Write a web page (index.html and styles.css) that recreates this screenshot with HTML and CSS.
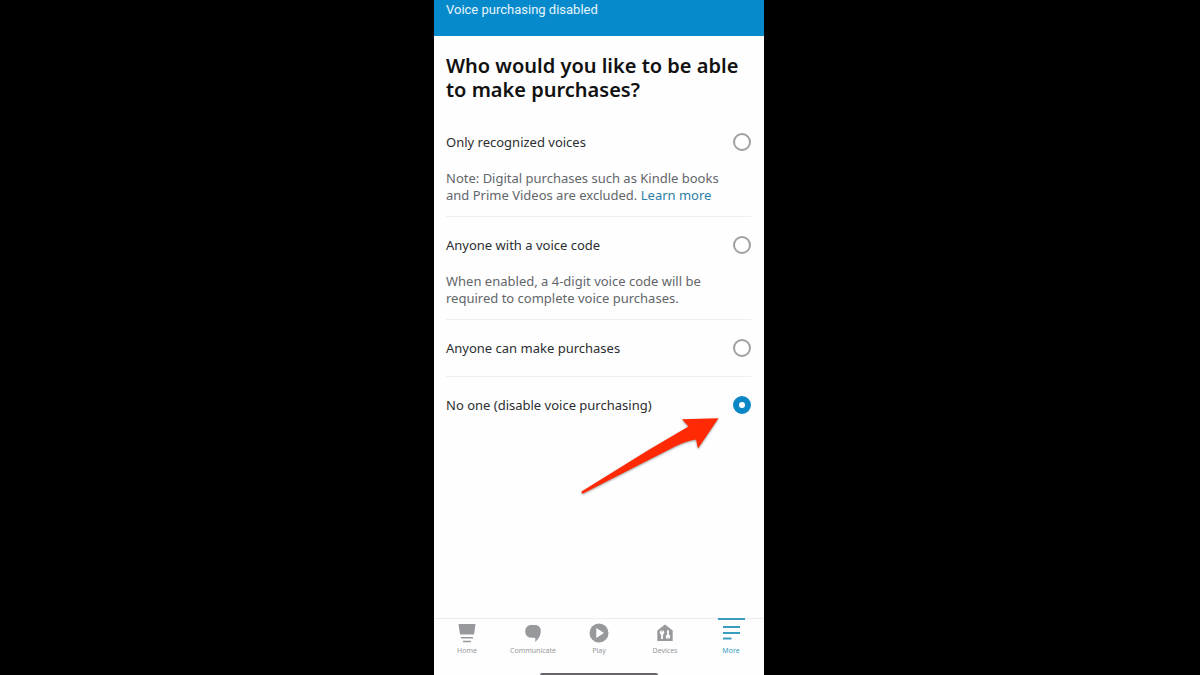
FILE: index.html
```html
<!DOCTYPE html>
<html lang="en">
<head>
<meta charset="utf-8">
<meta name="viewport" content="width=device-width, initial-scale=1">
<title>Voice purchasing</title>
<link rel="stylesheet" href="styles.css">
</head>
<body>
<div class="phone">
  <div class="toast" role="status">Voice purchasing disabled</div>
  <main class="content">
    <h1 class="title">Who would you like to be able to make purchases?</h1>
    <form class="options">
      <div class="option">
        <div class="option-head">
          <label for="recognized">Only recognized voices</label>
          <input class="radio" type="radio" name="buyer" id="recognized">
        </div>
        <p class="note">Note: Digital purchases such as Kindle books and Prime Videos are excluded. <a class="link" href="#">Learn more</a></p>
      </div>
      <div class="option">
        <div class="option-head">
          <label for="code">Anyone with a voice code</label>
          <input class="radio" type="radio" name="buyer" id="code">
        </div>
        <p class="note">When enabled, a 4-digit voice code will be required to complete voice purchases.</p>
      </div>
      <div class="option">
        <div class="option-head">
          <label for="anyone">Anyone can make purchases</label>
          <input class="radio" type="radio" name="buyer" id="anyone">
        </div>
      </div>
      <div class="option">
        <div class="option-head">
          <label for="noone">No one (disable voice purchasing)</label>
          <input class="radio" type="radio" name="buyer" id="noone" checked>
        </div>
        <svg class="arrow" viewBox="580 415 144 84" width="144" height="84" aria-hidden="true">
          <path d="M581.500 491.500 L648.500 450 L688.500 426.500 L682 419.300 L718.500 418.300 L698 448.500 L696 439.500 Q686 441 675 446.500 L583 493.500 Q581.500 494 581.500 491.500Z" fill="#ff2a04"/>
        </svg>
      </div>
    </form>
  </main>
  <nav class="tabs">
    <a class="tab" href="#">
      <svg class="icon" viewBox="0 0 20 20" aria-hidden="true"><path d="M1.500 1h17l-1.500 10.500H3zM4 14h12v1.500H4zM6 17.700h8v1.500H6z" fill="currentColor"/></svg>
      <span>Home</span>
    </a>
    <a class="tab" href="#">
      <svg class="icon" viewBox="0 0 20 20" aria-hidden="true"><path d="M8.500 2h3.500C15.500 2 17.800 4.500 17.800 8c0 4.500-2.300 8.500-5.800 11 .6-1.500.5-2.800 0-4.200H8.500C4.700 14.800 2.200 12 2.200 8.300S4.700 2 8.500 2z" fill="currentColor"/></svg>
      <span>Communicate</span>
    </a>
    <a class="tab" href="#">
      <svg class="icon" viewBox="0 0 20 20" aria-hidden="true"><circle cx="10" cy="10" r="9.500" fill="currentColor"/><path d="M7.300 5l7.700 5-7.700 5z" fill="#fff"/></svg>
      <span>Play</span>
    </a>
    <a class="tab" href="#">
      <svg class="icon" viewBox="0 0 20 20" aria-hidden="true"><path d="M10 1.500l7.700 6V18H2.300V7.500z" fill="currentColor"/><g fill="#fff"><circle cx="7" cy="9.500" r="2.300"/><path d="M6.100 10h1.800v6H6.100zM12.100 7.300h1.800v6h-1.800z"/><circle cx="13" cy="13.800" r="2.300"/></g><path d="M6.600 7h.8v2h-.8zM12.600 14.500h.8v2h-.8z" fill="currentColor"/></svg>
      <span>Devices</span>
    </a>
    <a class="tab tab-active" href="#" aria-current="page">
      <svg class="icon" viewBox="0 0 20 20" aria-hidden="true"><path d="M2 4h17M2 10h17M2 15.500h8.500" fill="none" stroke="currentColor" stroke-width="1.800"/></svg>
      <span>More</span>
    </a>
  </nav>
  <div class="home-bar"></div>
</div>
</body>
</html>
```

FILE: styles.css
```css
* {
  box-sizing: border-box;
}

body {
  margin: 0;
  padding-right: 2px;
  background: #000;
  font-family: "Noto Sans", "Open Sans", sans-serif;
}

.phone {
  display: flex;
  flex-direction: column;
  width: 100%;
  max-width: 330px;
  min-height: 100vh;
  margin: 0 auto;
  background: #fefefe;
}

.toast {
  padding: 0 12px 16px;
  background: #078acb;
  color: #e6f5fc;
  font-family: Roboto, "Liberation Sans", sans-serif;
  font-size: 13px;
  line-height: 20px;
}

.content {
  flex: 1;
  padding: 18px 13px 0 12px;
}

.title {
  margin: 0 0 12px;
  color: #111;
  font-size: 20px;
  font-weight: 600;
  line-height: 24px;
}

.option {
  position: relative;
  padding: 18px 0;
  border-bottom: 1px solid #efefef;
  color: #2b2e31;
  font-size: 13px;
}

.option:has(.note) {
  padding-bottom: 12px;
}

.option:last-child {
  border-bottom: 0;
}

.option-head {
  display: flex;
  align-items: center;
  justify-content: space-between;
  line-height: 20px;
}

.radio {
  appearance: none;
  width: 18px;
  height: 18px;
  margin: 0;
  border: 2px solid #a0a0a0;
  border-radius: 50%;
  background: #fff;
}

.radio:checked {
  border: 6px solid #0c87c6;
}

.note {
  margin: 18px 0 0;
  padding-right: 20px;
  color: #62666a;
  line-height: 17px;
}

.link {
  color: #2c7fa8;
  text-decoration: none;
}

.arrow {
  position: absolute;
  top: 38px;
  right: 27px;
  filter: drop-shadow(0 1px 1px rgba(0, 0, 0, 0.4));
}

.tabs {
  display: flex;
  border-top: 1px solid #ececec;
}

.tab {
  display: flex;
  flex: 1;
  flex-direction: column;
  align-items: center;
  gap: 3px;
  padding: 4px 0 17px;
  color: #98999c;
  font-size: 7px;
  line-height: 10px;
  text-decoration: none;
}

.tab-active {
  position: relative;
  color: #3a9dc0;
}

.tab-active::before {
  content: "";
  position: absolute;
  top: -1px;
  width: 27px;
  height: 2px;
  background: #3a9dc0;
}

.icon {
  width: 20px;
  height: 20px;
}

.home-bar {
  width: 118px;
  height: 2px;
  margin: 0 auto;
  border-radius: 2px 2px 0 0;
  background: #68666a;
}
```
